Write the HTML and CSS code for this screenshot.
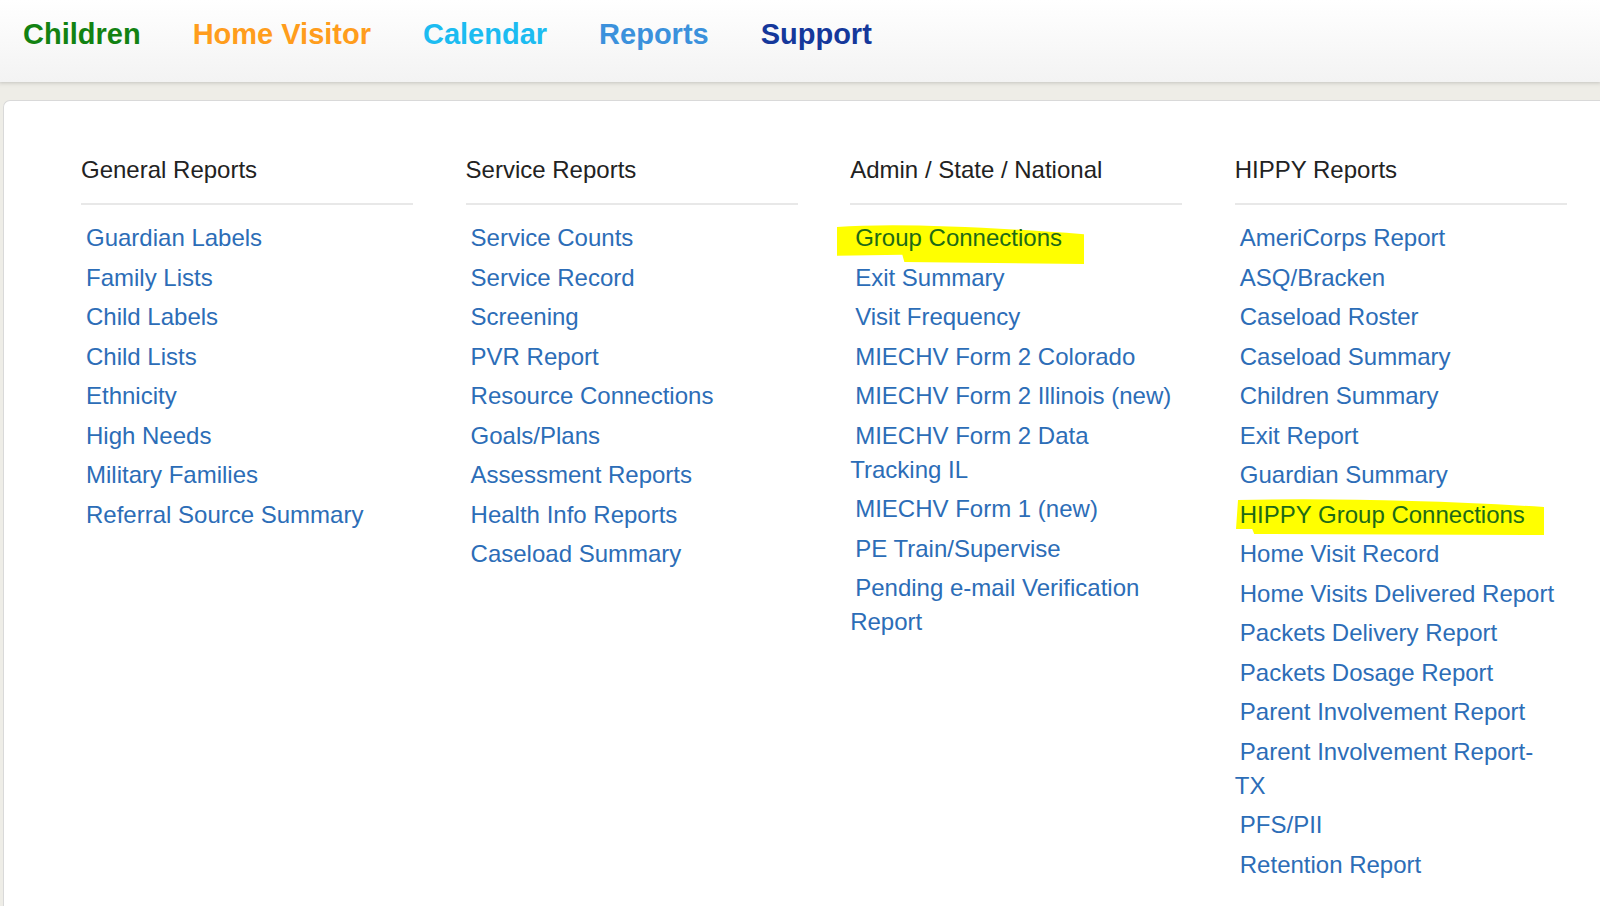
FILE: index.html
```html
<!DOCTYPE html>
<html lang="en">
<head>
<meta charset="utf-8">
<title>Reports</title>
<link rel="stylesheet" href="styles.css">
</head>
<body>
<header class="topbar">
  <nav class="mainnav">
    <a class="nav-item nav-children" href="#">Children</a>
    <a class="nav-item nav-visitor" href="#">Home Visitor</a>
    <a class="nav-item nav-calendar" href="#">Calendar</a>
    <a class="nav-item nav-reports" href="#">Reports</a>
    <a class="nav-item nav-support" href="#">Support</a>
  </nav>
</header>
<div class="band">
  <main class="card">
    <section class="col">
      <h2 class="col-title">General Reports</h2>
      <ul class="links">
        <li><a href="#">Guardian Labels</a></li>
        <li><a href="#">Family Lists</a></li>
        <li><a href="#">Child Labels</a></li>
        <li><a href="#">Child Lists</a></li>
        <li><a href="#">Ethnicity</a></li>
        <li><a href="#">High Needs</a></li>
        <li><a href="#">Military Families</a></li>
        <li><a href="#">Referral Source Summary</a></li>
      </ul>
    </section>
    <section class="col">
      <h2 class="col-title">Service Reports</h2>
      <ul class="links">
        <li><a href="#">Service Counts</a></li>
        <li><a href="#">Service Record</a></li>
        <li><a href="#">Screening</a></li>
        <li><a href="#">PVR Report</a></li>
        <li><a href="#">Resource Connections</a></li>
        <li><a href="#">Goals/Plans</a></li>
        <li><a href="#">Assessment Reports</a></li>
        <li><a href="#">Health Info Reports</a></li>
        <li><a href="#">Caseload Summary</a></li>
      </ul>
    </section>
    <section class="col">
      <h2 class="col-title">Admin / State / National</h2>
      <ul class="links">
        <li class="marked">
          <svg class="marker marker-a" viewBox="0 0 242 40" preserveAspectRatio="none" aria-hidden="true"><path d="M0,4 Q70,-2 242,11 L242,40 L66,38 L64,31 L0,32 Z"/></svg>
          <a href="#">Group Connections</a>
        </li>
        <li><a href="#">Exit Summary</a></li>
        <li><a href="#">Visit Frequency</a></li>
        <li><a href="#">MIECHV Form 2 Colorado</a></li>
        <li><a href="#">MIECHV Form 2 Illinois (new)</a></li>
        <li><a href="#">MIECHV Form 2 Data Tracking IL</a></li>
        <li><a href="#">MIECHV Form 1 (new)</a></li>
        <li><a href="#">PE Train/Supervise</a></li>
        <li><a href="#">Pending e-mail Verification Report</a></li>
      </ul>
    </section>
    <section class="col">
      <h2 class="col-title">HIPPY Reports</h2>
      <ul class="links">
        <li><a href="#">AmeriCorps Report</a></li>
        <li><a href="#">ASQ/Bracken</a></li>
        <li><a href="#">Caseload Roster</a></li>
        <li><a href="#">Caseload Summary</a></li>
        <li><a href="#">Children Summary</a></li>
        <li><a href="#">Exit Report</a></li>
        <li><a href="#">Guardian Summary</a></li>
        <li class="marked">
          <svg class="marker marker-b" viewBox="0 0 304 36" preserveAspectRatio="none" aria-hidden="true"><path d="M2,1 Q140,-2 304,8 L304,36 L18,35 L16,30 L0,30 Z"/></svg>
          <a href="#">HIPPY Group Connections</a>
        </li>
        <li><a href="#">Home Visit Record</a></li>
        <li><a href="#">Home Visits Delivered Report</a></li>
        <li><a href="#">Packets Delivery Report</a></li>
        <li><a href="#">Packets Dosage Report</a></li>
        <li><a href="#">Parent Involvement Report</a></li>
        <li><a href="#">Parent Involvement Report-TX</a></li>
        <li><a href="#">PFS/PII</a></li>
        <li><a href="#">Retention Report</a></li>
      </ul>
    </section>
  </main>
</div>
</body>
</html>
```

FILE: styles.css
```css
html, body {
  margin: 0;
  padding: 0;
}

body {
  font-family: "Liberation Sans", Arial, sans-serif;
  background: #eeede7;
  overflow: hidden;
  height: 906px;
}

.topbar {
  height: 82px;
  box-sizing: border-box;
  background: linear-gradient(#ffffff, #f3f3f3);
  box-shadow: 0 1px 3px rgba(0, 0, 0, 0.12);
  position: relative;
  z-index: 1;
}

.mainnav {
  display: flex;
  gap: 52px;
  padding: 16px 0 0 23px;
}

.nav-item {
  font-size: 29px;
  font-weight: bold;
  line-height: 36px;
  text-decoration: none;
}

.nav-children { color: #128212; }
.nav-visitor  { color: #ff9d1c; }
.nav-calendar { color: #1cbcf1; }
.nav-reports  { color: #3b91dc; }
.nav-support  { color: #15389b; }

.band {
  padding: 18px 0 0 3px;
  background:
    linear-gradient(rgba(0,0,0,0.04), rgba(0,0,0,0) 6px),
    #eeede7;
}

.card {
  background: #ffffff;
  border: 1px solid #d9d9d9;
  border-right: none;
  border-radius: 7px 0 0 0;
  min-height: 820px;
  box-sizing: border-box;
  padding: 52px 0 0 77px;
  display: grid;
  grid-template-columns: repeat(4, 332px);
  column-gap: 52.6px;
  align-items: start;
}

.col-title {
  margin: 0;
  font-size: 24px;
  font-weight: normal;
  line-height: 34px;
  color: #222222;
  padding-bottom: 16px;
  border-bottom: 2px solid #e8e8e8;
}

.links {
  list-style: none;
  margin: 16px 0 0 0;
  padding: 0 8px 0 0;
}

.links li {
  position: relative;
  font-size: 24px;
  line-height: 34px;
  margin-bottom: 5.5px;
  text-indent: 5px;
}

.links a {
  color: #2c6db7;
  text-decoration: none;
  position: relative;
}

.marked a {
  color: #1d6a16;
}

.marker {
  position: absolute;
  fill: #ffff00;
  display: block;
}

.marker-a {
  left: -13px;
  top: 2px;
  width: 247px;
  height: 41px;
}

.marker-b {
  left: 1px;
  top: 1px;
  width: 308px;
  height: 36px;
}
```
